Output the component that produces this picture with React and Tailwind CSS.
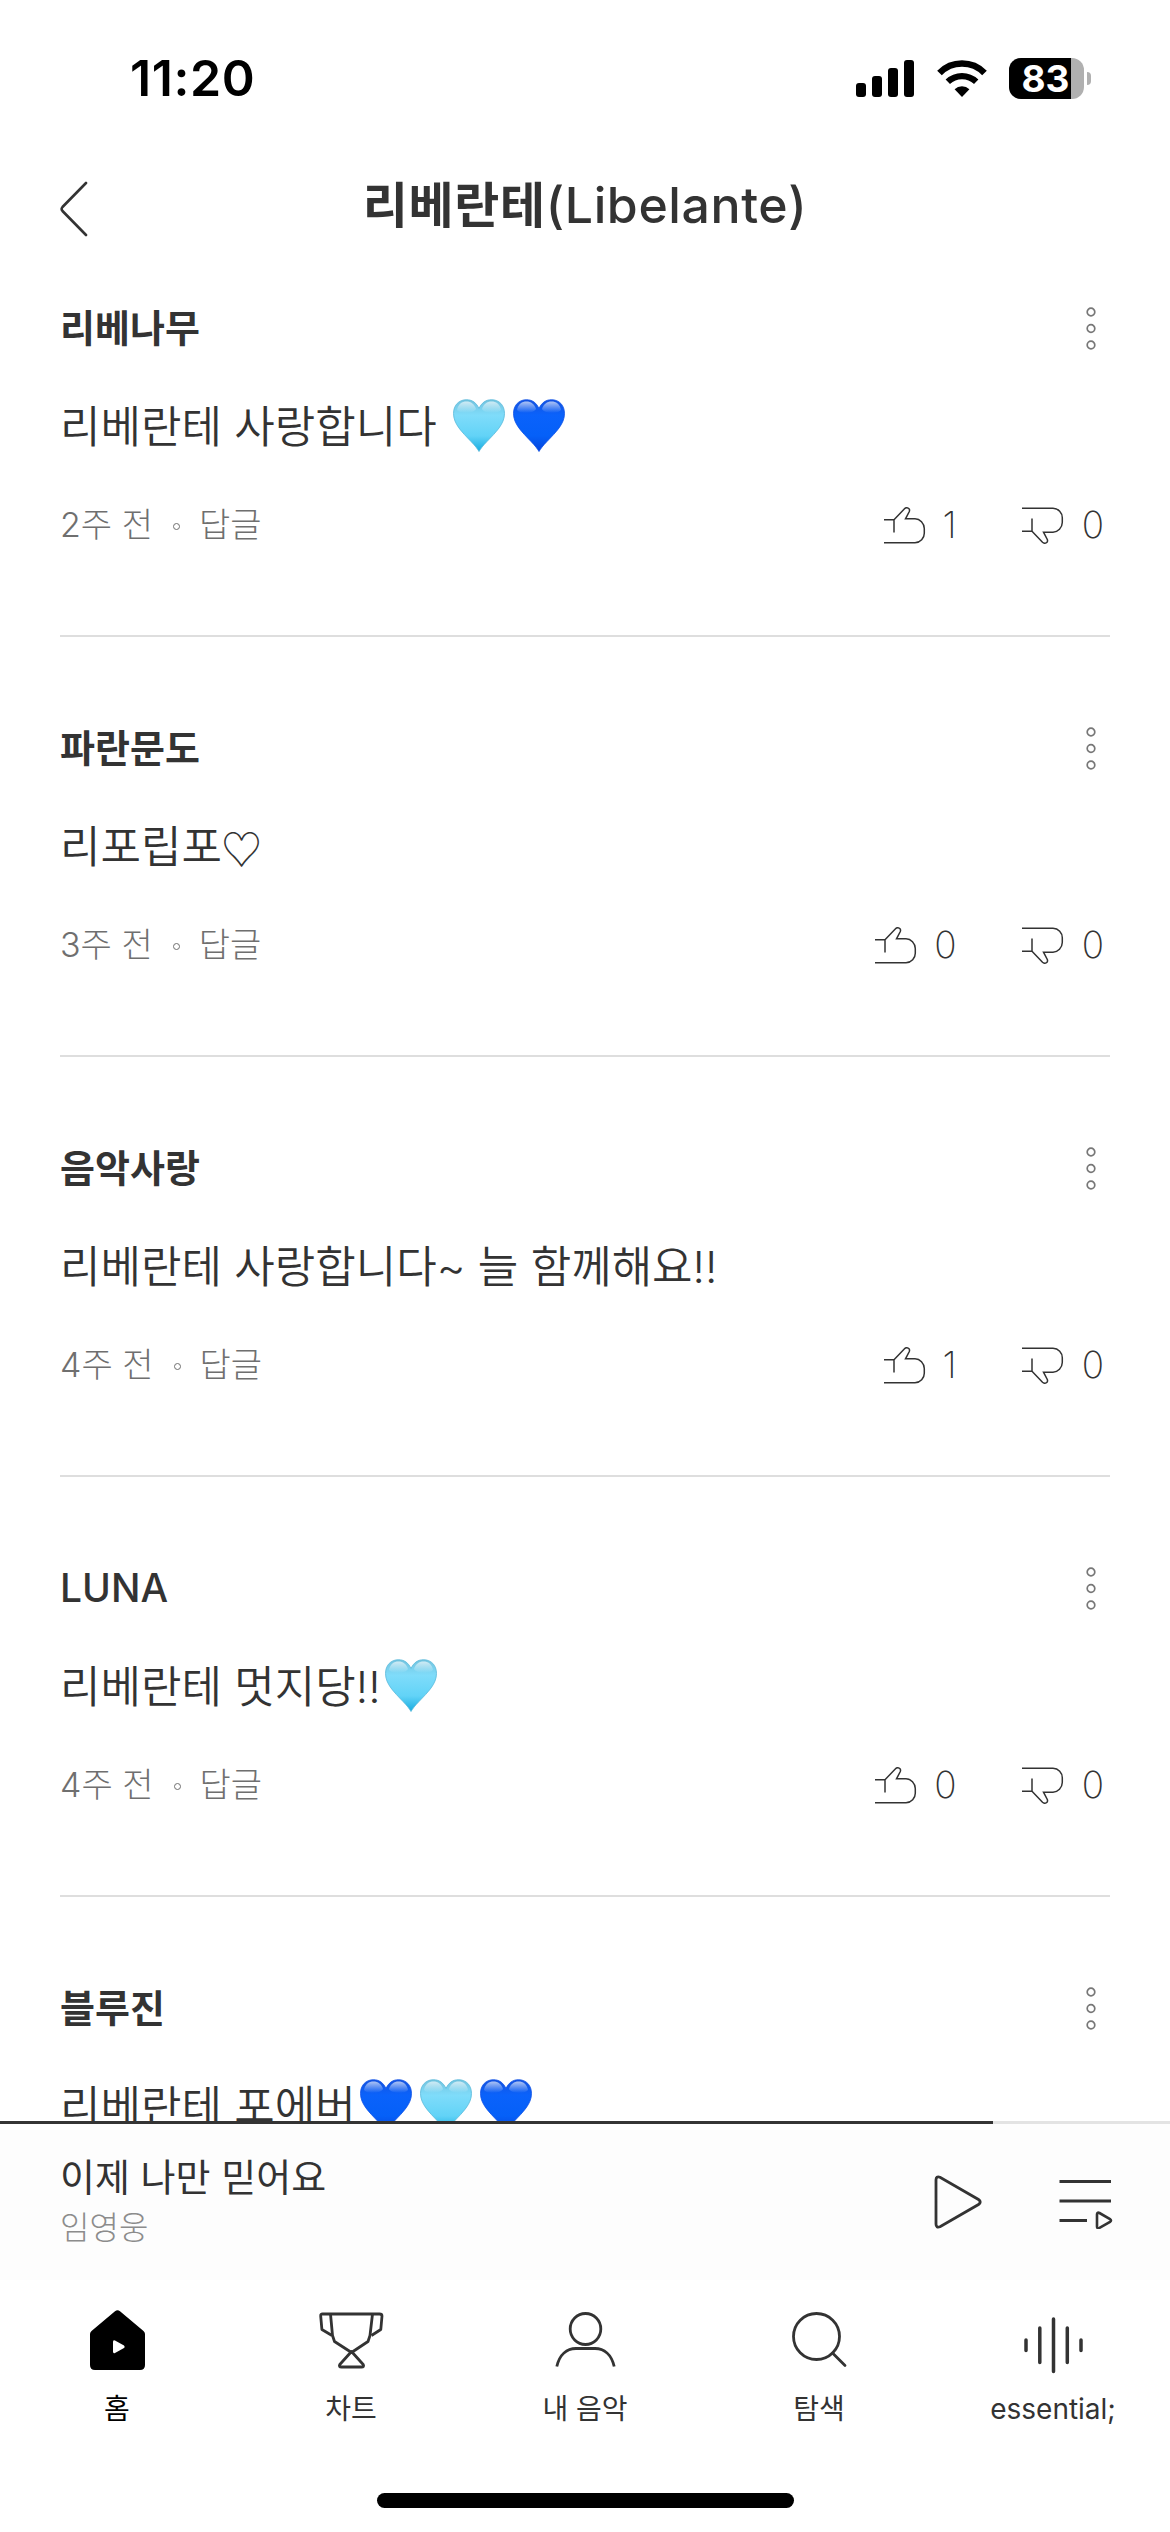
const comments = [
  { id: 1, name: "리베나무", text: "리베란테 사랑합니다 ", hearts: ["sky", "blue"], time: "2주 전", up: 1, down: 0 },
  { id: 2, name: "파란문도", text: "리포립포", outline: true, time: "3주 전", up: 0, down: 0 },
  { id: 3, name: "음악사랑", text: "리베란테 사랑합니다~ 늘 함께해요!!", time: "4주 전", up: 1, down: 0 },
  { id: 4, name: "LUNA", text: "리베란테 멋지당!!", hearts: ["sky"], time: "4주 전", up: 0, down: 0 },
  { id: 5, name: "블루진", text: "리베란테 포에버", hearts: ["blue", "sky", "blue"], time: "4주 전", up: 0, down: 0 },
];

const heartColors = {
  sky: { top: "#74c3de", mid: "#7fdcfa", low: "#62d3f7", tip: "#17ace0", edge: "#58b9da" },
  blue: { top: "#1553e0", mid: "#0a62fb", low: "#0560f8", tip: "#0644dc", edge: "#0b4fe6" },
};

const Heart = ({ color }) => {
  const c = heartColors[color];
  const d =
    "M26 52.500C24.500 50 22 46.500 18 42.500C9 33 .5 25 .5 14.500C.5 6 6 .7 13.500 .7C19.500 .7 23.500 4 26 9.500C28.500 4 32.500 .7 38.500 .7C46 .7 51.500 6 51.500 14.500C51.500 25 43 33 34 42.500C30 46.500 27.500 50 26 52.500Z";
  return (
    <svg viewBox="0 0 52 53" className="mx-[4px] mb-[3px] h-[53px] w-[52px] shrink-0">
      <defs>
        <linearGradient id={`fill-${color}`} x1="0" y1="0" x2="0" y2="1">
          <stop offset="0" stopColor={c.top} />
          <stop offset=".3" stopColor={c.mid} />
          <stop offset=".7" stopColor={c.low} />
          <stop offset="1" stopColor={c.tip} />
        </linearGradient>
        <linearGradient id={`shine-${color}`} x1="0" y1="0" x2="0" y2="1">
          <stop offset="0" stopColor="#fff" stopOpacity=".65" />
          <stop offset="1" stopColor="#fff" stopOpacity="0" />
        </linearGradient>
      </defs>
      <path d={d} fill={`url(#fill-${color})`} stroke={c.edge} strokeWidth=".8" />
      <path d="M4 11C5 5 9 2.500 13.500 2.500C18 2.500 21.500 5 23 10C20 15 7 15 4 11Z" fill={`url(#shine-${color})`} />
      <path d="M29 10C30.500 5 34 2.500 38.500 2.500C43 2.500 47 5 48 11C45 15 32 15 29 10Z" fill={`url(#shine-${color})`} />
    </svg>
  );
};

const Thumb = ({ down }) => (
  <svg
    viewBox="0 0 42 37"
    className={down ? "h-[37px] w-[42px] -scale-y-100" : "h-[37px] w-[42px]"}
    fill="none"
    stroke="#333"
    strokeWidth="1.500"
  >
    <path d="M0 12.700H10V25.500M10 12.700L20.500 1.700C22.500 -.2 26.500 1 25.300 4.500L21.500 11.800H31A9.500 10 0 0 1 40.300 21.500V26A9.500 9.500 0 0 1 31 35.800H0" />
  </svg>
);

const MoreButton = () => (
  <svg viewBox="0 0 10 43" className="mr-[14px] h-[43px] w-[10px]" fill="none" stroke="#777" strokeWidth="1.700">
    <circle cx="5" cy="5" r="3.800" />
    <circle cx="5" cy="21.500" r="3.800" />
    <circle cx="5" cy="38" r="3.800" />
  </svg>
);

const Comment = ({ item }) => (
  <li className="h-[420px] border-b-2 border-[#dedede] pt-[91px]">
    <div className="flex h-[40px] items-center justify-between">
      <span
        className={
          item.name === "LUNA"
            ? "text-[39px] font-medium leading-[40px]"
            : "text-[38px] font-bold leading-[40px]"
        }
      >
        {item.name}
      </span>
      <MoreButton />
    </div>
    <p className="mt-[49px] flex h-[60px] items-center whitespace-pre text-[44px] font-[350] leading-[60px]">
      {item.text}
      {item.outline && <span className="-ml-px font-['Noto_Sans_CJK_KR',sans-serif] text-[41px]">♡</span>}
      {item.hearts && item.hearts.map((color, i) => <Heart key={i} color={color} />)}
    </p>
    <div className="mt-[48px] flex h-[40px] items-center justify-between">
      <div className="flex items-center text-[34px] font-light leading-[40px] text-[#6f6f6f]">
        <span>{item.time}</span>
        <span className="ml-[20px] mr-[19px] mt-[2px] h-[7px] w-[7px] rounded-full border border-[#6f6f6f]" />
        <span>답글</span>
      </div>
      <div className="mr-[6px] flex items-center text-[37px] font-extralight leading-[40px]">
        <Thumb />
        <span className="ml-[17px]">{item.up}</span>
        <span className="ml-[65px] flex">
          <Thumb down />
        </span>
        <span className="ml-[18px]">{item.down}</span>
      </div>
    </div>
  </li>
);

const StatusBar = () => (
  <div className="flex h-[156px] shrink-0 items-center justify-between pl-[130px] pr-[79px] text-black">
    <span className="text-[50px] font-semibold leading-none tracking-[0.6px]">11:20</span>
    <div className="flex items-center">
      <div className="flex h-[37px] items-end gap-[6px]">
        <span className="h-[14px] w-[10px] rounded-[3px] bg-black" />
        <span className="h-[21px] w-[10px] rounded-[3px] bg-black" />
        <span className="h-[29px] w-[10px] rounded-[3px] bg-black" />
        <span className="h-[37px] w-[10px] rounded-[3px] bg-black" />
      </div>
      <svg viewBox="0 0 50 37" className="ml-[23px] h-[37px] w-[50px]" fill="none" stroke="#000">
        <path d="M2.500 13A31.500 31.500 0 0 1 47.500 13" strokeWidth="6.500" />
        <path d="M10.800 21.800A20.500 20.500 0 0 1 39.200 21.800" strokeWidth="6.300" />
        <path d="M25 37L17.600 29.300A10.800 10.800 0 0 1 32.400 29.300Z" fill="#000" stroke="none" />
      </svg>
      <div className="ml-[22px] flex h-[41px] w-[75px] items-center rounded-[12px] bg-[#b0b0b0]">
        <span className="flex h-full w-[62px] items-center justify-center rounded-l-[12px] bg-black pl-[11px] text-[37px] font-bold leading-[41px] text-white">
          83
        </span>
      </div>
      <span className="ml-[3px] h-[13px] w-[4px] rounded-r-full bg-[#b0b0b0]" />
    </div>
  </div>
);

const Header = () => (
  <header className="grid h-[100px] shrink-0 grid-cols-[60px_1fr_60px] items-center px-[60px]">
    <svg
      viewBox="0 0 28 56"
      className="mt-[6px] h-[56px] w-[28px]"
      fill="none"
      stroke="#333"
      strokeWidth="2.600"
      strokeLinecap="round"
    >
      <path d="M26 2L2.500 26Q.8 28 2.500 30L26 54" />
    </svg>
    <h1 className="mb-[2px] whitespace-nowrap text-center text-[49px] font-medium leading-[60px]">
      <span className="font-bold tracking-[0.7px]">리베란테</span>
      <span className="text-[50px] tracking-[0.6px]">(Libelante)</span>
    </h1>
  </header>
);

const Player = () => (
  <div className="flex h-[159px] shrink-0 flex-col bg-[#fdfdfd]">
    <div className="h-[3px] bg-[#e3e3e3]">
      <div className="h-full w-[993px] bg-[#333]" />
    </div>
    <div className="flex flex-1 items-center pl-[60px] pr-[57px]">
      <div className="flex-1">
        <p className="text-[38px] leading-[52px]">이제 나만 믿어요</p>
        <p className="text-[32px] font-light leading-[50px] text-[#8c8c8c]">임영웅</p>
      </div>
      <svg viewBox="0 0 48 54" className="h-[54px] w-[48px]" fill="none" stroke="#333" strokeWidth="2.800">
        <path d="M2 5Q2 .8 6 2.300L44.500 24.500Q48 27 44.500 29.500L6 51.700Q2 53.200 2 49Z" />
      </svg>
      <svg viewBox="0 0 54 54" className="ml-[77px] h-[54px] w-[54px]" fill="none" stroke="#333" strokeWidth="2.800">
        <path d="M.5 6.500H52M.5 26H52M.5 45.500H28" />
        <path d="M38 39.500Q38 36.800 40.500 38L51 44Q53 45.500 51 47L40.500 52.800Q38 54 38 51.500Z" strokeWidth="2.600" />
      </svg>
    </div>
  </div>
);

const tabs = [
  {
    label: "홈",
    active: true,
    icon: (
      <>
        <path
          d="M32 4.300Q34.500 2.200 37 4.300L60.500 24Q62 25.300 62 27V58Q62 63 57 63H12Q7 63 7 58V27Q7 25.300 8.500 24Z"
          fill="#000"
          stroke="none"
        />
        <path d="M30 35Q30 32.500 32 33.500L41 38.500Q42.500 40 41 41L32 46Q30 47 30 44.500Z" fill="#fff" stroke="none" />
      </>
    ),
  },
  {
    label: "차트",
    icon: (
      <>
        <path d="M5.500 7H62.500Q65 7 65 9L63.800 22.500L54.500 28.500M5.500 7Q3.500 7 3.700 9L4.900 22.500L15 28.500" />
        <path d="M13.500 7L15.500 28.500L17.500 34.500L34.500 45.500L51 34.500L53 28.500L55.500 7" />
        <path d="M34.500 44.500L22.800 57.500Q21.500 60 24.500 60H44.500Q47.500 60 46.200 57.500Z" />
      </>
    ),
  },
  {
    label: "내 음악",
    icon: (
      <>
        <ellipse cx="34.500" cy="22" rx="15.300" ry="15.500" />
        <path d="M5.800 59.500C8.500 47.500 16 41.500 25 41.500H44C53 41.500 60.500 47.500 63.200 59.500" />
      </>
    ),
  },
  {
    label: "탐색",
    icon: (
      <>
        <circle cx="31.500" cy="29.500" r="23" />
        <path d="M47.500 46L60 58.500" strokeLinecap="round" />
      </>
    ),
  },
  {
    label: "essential;",
    icon: (
      <path
        d="M7 33V43.500M20.800 21V55.500M34.500 12V64.500M48.300 21V55.500M62 33V43.500"
        strokeWidth="3.500"
        strokeLinecap="round"
      />
    ),
  },
];

const TabBar = () => (
  <nav className="h-[252px] shrink-0">
    <ul className="grid h-[213px] grid-cols-5 pt-[27px]">
      {tabs.map((tab) => (
        <li key={tab.label} className={tab.active ? "flex flex-col items-center text-black" : "flex flex-col items-center"}>
          <svg viewBox="0 0 69 69" className="h-[69px] w-[69px]" fill="none" stroke="#333" strokeWidth="2.800" strokeLinejoin="round">
            {tab.icon}
          </svg>
          <span className="mt-[13px] whitespace-nowrap text-[28px] leading-[40px]">{tab.label}</span>
        </li>
      ))}
    </ul>
    <div className="mx-auto h-[15px] w-[417px] rounded-full bg-black" />
  </nav>
);

const App = () => {
  return (
    <div className="flex h-[2532px] w-[1170px] flex-col overflow-hidden bg-white font-[Inter,'Noto_Sans_CJK_KR',sans-serif] text-[#333]">
      <StatusBar />
      <Header />
      <main className="min-h-0 flex-1 overflow-hidden px-[60px]">
        <ul className="-mt-[39px]">
          {comments.map((item) => (
            <Comment key={item.id} item={item} />
          ))}
        </ul>
      </main>
      <Player />
      <TabBar />
    </div>
  );
};

export default App;
